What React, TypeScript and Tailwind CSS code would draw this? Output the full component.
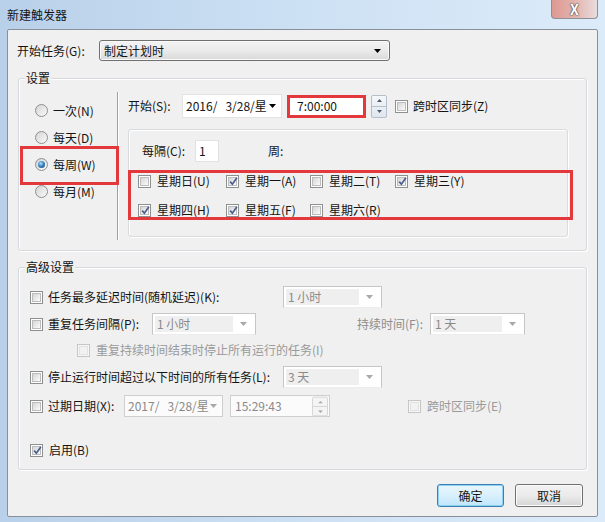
import React from 'react';

const FONT = "font-['Noto_Sans_CJK_SC',sans-serif]";

const Arrow = ({ gray = false }: { gray?: boolean }) => (
  <svg width="7" height="4" viewBox="0 0 7 4">
    <path d="M0 0h7L3.5 4z" fill={gray ? '#a8a8a8' : '#000'} />
  </svg>
);

const Check = ({ checked = false, disabled = false }: { checked?: boolean; disabled?: boolean }) => (
  <span
    className={`relative inline-flex h-[13px] w-[13px] shrink-0 items-center justify-center border ${
      disabled ? 'border-[#c6c6c6] bg-[#f7f7f7]' : 'border-[#8e8f8f] bg-white'
    }`}
  >
    <span
      className={`h-[9px] w-[9px] border ${
        disabled ? 'border-[#e2e2e2] bg-[#f2f2f2]' : 'border-[#bcbcbc] bg-gradient-to-br from-[#d6d6d6] to-[#fbfbfb]'
      }`}
    />
    {checked && (
      <svg className="absolute left-[1px] top-[0px]" width="11" height="11" viewBox="0 0 11 11">
        <path d="M2.2 5.6 L4.4 8.2 L8.9 1.8" fill="none" stroke="#4a5d8c" strokeWidth="1.7" />
      </svg>
    )}
  </span>
);

const Radio = ({ checked = false }: { checked?: boolean }) => (
  <span className="inline-flex h-[13px] w-[13px] shrink-0 items-center justify-center rounded-full border border-[#8e8f8f] bg-gradient-to-br from-[#d4d4d4] to-[#fafafa]">
    {checked && (
      <span className="h-[7px] w-[7px] rounded-full bg-[radial-gradient(circle_at_40%_35%,#b6e1f7_0%,#3b86c4_45%,#123f6c_100%)]" />
    )}
  </span>
);

const Spin = ({ gray = false }: { gray?: boolean }) => (
  <div
    className={`flex h-[23px] w-[16px] flex-col border ${
      gray ? 'border-[#d2d2d2] bg-[#f4f4f4]' : 'border-[#b5bfcc] bg-gradient-to-b from-[#f5f8fb] to-[#dfe6ee]'
    } rounded-[2px]`}
  >
    <div className={`flex flex-1 items-center justify-center border-b ${gray ? 'border-[#d2d2d2]' : 'border-[#b5bfcc]'}`}>
      <svg width="5" height="3" viewBox="0 0 5 3">
        <path d="M0 3h5L2.5 0z" fill={gray ? '#a8a8a8' : '#4d5b6e'} />
      </svg>
    </div>
    <div className="flex flex-1 items-center justify-center">
      <svg width="5" height="3" viewBox="0 0 5 3">
        <path d="M0 0h5L2.5 3z" fill={gray ? '#a8a8a8' : '#4d5b6e'} />
      </svg>
    </div>
  </div>
);

const DCombo = ({ className, text }: { className: string; text: string }) => (
  <div className={`${className} flex h-[22px] border border-[#c6c6c6] border-b-[#ececec] bg-white p-[2px]`}>
    <div className="flex flex-1 items-center bg-[#efefef] pl-[2px] text-[#8a8a8a]">{text}</div>
    <div className="flex w-[20px] items-center justify-center">
      <Arrow gray />
    </div>
  </div>
);

const Group = ({ className, label, children }: { className: string; label: string; children: React.ReactNode }) => (
  <div
    className={`${className} relative ml-[10px] w-[569px] rounded-[3px] border border-[#d5d9de] shadow-[inset_1px_1px_0_#ffffff,1px_1px_0_#ffffff]`}
  >
    <span className="absolute left-[6px] top-[-9px] bg-[#f0f0f0] px-[1px]">{label}</span>
    {children}
  </div>
);

const Day = ({ label, checked, className }: { label: string; checked?: boolean; className: string }) => (
  <div className={`${className} flex items-center gap-[6px]`}>
    <Check checked={checked} />
    <span>{label}</span>
  </div>
);

const Btn = ({ label, def = false }: { label: string; def?: boolean }) => (
  <div
    className={`flex h-[23px] items-center justify-center rounded-[3px] border ${
      def
        ? 'w-[67px] border-[#3c7fb1] bg-gradient-to-b from-[#eaf6fd] via-[#d9f0fc] to-[#bee6fd] shadow-[inset_0_0_0_1px_#8ed2f5]'
        : 'w-[68px] border-[#707070] bg-gradient-to-b from-[#f2f2f2] via-[#ebebeb] to-[#d5d5d5] shadow-[inset_0_0_0_1px_#fcfcfc]'
    }`}
  >
    {label}
  </div>
);

export default function App() {
  return (
    <div
      className={`${FONT} h-[522px] w-[605px] overflow-hidden bg-gradient-to-r from-[#b8d0e9] via-[#cde1f4] to-[#dcebf9] text-[12px] leading-[16px] text-[#141414]`}
    >
      {/* Title bar */}
      <div className="flex h-[29px] items-start justify-between">
        <span className="pl-[7px] pt-[7px]">新建触发器</span>
        <div className="mr-[7px] flex h-[19px] w-[47px] items-center justify-center rounded-b-[4px] border border-t-0 border-[#8f8f99] bg-gradient-to-r from-[#dd9892] via-[#e3b3ae] to-[#e8dcdc]">
          <span className="text-[14px] font-bold leading-[14px] text-white [text-shadow:0_0_2px_#333,0_0_1px_#333]">X</span>
        </div>
      </div>

      {/* Client area */}
      <div className="mx-[7px] flex h-[488px] flex-col rounded-[2px] border border-[#8a9099] bg-[#f0f0f0]">
        <div className="mt-[10px] flex h-[21px] items-center pl-[9px]">
          <span className="w-[82px]">开始任务(G):</span>
          <div className="flex h-[21px] w-[291px] items-center justify-between rounded-[3px] border border-[#707070] bg-gradient-to-b from-[#f3f3f3] via-[#ebebeb] to-[#d9d9d9] pl-[4px] pr-[8px] shadow-[inset_0_0_0_1px_#fafafa]">
            <span>制定计划时</span>
            <Arrow />
          </div>
        </div>

        {/* 设置 */}
        <Group className="mt-[17px] h-[173px]" label="设置">
          <div className="absolute left-[1px] top-[67px] h-[39px] w-[99px] border-[3px] border-[#e3383c]" />
          <div className="flex">
            <div className="flex w-[98px] flex-col pl-[16px] pt-[18px]">
              {[
                ['一次(N)', false],
                ['每天(D)', false],
                ['每周(W)', true],
                ['每月(M)', false],
              ].map(([t, c]) => (
                <div key={t as string} className="flex h-[27px] items-center gap-[5px]">
                  <Radio checked={c as boolean} />
                  <span>{t as string}</span>
                </div>
              ))}
            </div>
            <div className="mt-[13px] h-[148px] w-[2px] border-l border-r border-l-[#a0a0a0] border-r-white" />
            <div className="flex flex-col pl-[9px] pt-[15px]">
              <div className="flex h-[24px] items-center">
                <span className="w-[54px]">开始(S):</span>
                <div className="flex h-[24px] w-[100px] items-center justify-between border border-[#e2e2e2] bg-white pl-[3px] pr-[5px]">
                  <span className="whitespace-pre">2016/   3/28/星</span>
                  <Arrow />
                </div>
                <div className="ml-[5px] flex h-[23px] w-[79px] items-center border-[3px] border-[#e3383c] bg-white pl-[7px]">
                  7:00:00
                </div>
                <div className="ml-[5px]">
                  <Spin />
                </div>
                <div className="ml-[8px] flex items-center gap-[5px]">
                  <Check />
                  <span>跨时区同步(Z)</span>
                </div>
              </div>

              <div className="relative mt-[11px] h-[108px] w-[440px] rounded-[3px] border border-[#d9dcdf] shadow-[inset_1px_1px_0_#ffffff,1px_1px_0_#ffffff]">
                <div className="absolute left-[-1px] top-[40px] h-[50px] w-[445px] border-[3px] border-[#e3383c]" />
                <div className="mt-[10px] flex h-[22px] items-center pl-[13px]">
                  <span className="w-[53px]">每隔(C):</span>
                  <div className="flex h-[22px] w-[24px] items-center border border-[#e2e2e2] bg-white pl-[3px]">1</div>
                  <span className="ml-[49px]">周:</span>
                </div>
                <div className="mt-[9px] flex h-[20px] items-center pl-[9px]">
                  <Day className="w-[88px]" label="星期日(U)" />
                  <Day className="w-[84px]" label="星期一(A)" checked />
                  <Day className="w-[85px]" label="星期二(T)" />
                  <Day className="w-[90px]" label="星期三(Y)" checked />
                </div>
                <div className="mt-[9px] flex h-[20px] items-center pl-[9px]">
                  <Day className="w-[88px]" label="星期四(H)" checked />
                  <Day className="w-[84px]" label="星期五(F)" checked />
                  <Day className="w-[85px]" label="星期六(R)" />
                </div>
              </div>
            </div>
          </div>
        </Group>

        {/* 高级设置 */}
        <Group className="mt-[16px] h-[203px]" label="高级设置">
          <div className="flex flex-col pl-[11px] pt-[18px]">
            <div className="flex h-[22px] items-center">
              <Check />
              <span className="ml-[5px] w-[235px]">任务最多延迟时间(随机延迟)(K):</span>
              <DCombo className="w-[99px]" text="1 小时" />
            </div>
            <div className="mt-[5px] flex h-[22px] items-center">
              <Check />
              <span className="ml-[5px] w-[104px]">重复任务间隔(P):</span>
              <DCombo className="w-[104px]" text="1 小时" />
              <span className="w-[168px] pr-[1px] text-right text-[#8d8d8d]">持续时间(F):</span>
              <DCombo className="ml-[6px] w-[95px]" text="1 天" />
            </div>
            <div className="mt-[5px] flex h-[20px] items-center pl-[47px]">
              <Check disabled />
              <span className="ml-[6px] text-[#9a9a9a]">重复持续时间结束时停止所有运行的任务(I)</span>
            </div>
            <div className="mt-[6px] flex h-[22px] items-center">
              <Check />
              <span className="ml-[5px] w-[235px]">停止运行时间超过以下时间的所有任务(L):</span>
              <DCombo className="w-[99px]" text="3 天" />
            </div>
            <div className="mt-[7px] flex h-[22px] items-center">
              <Check />
              <span className="ml-[5px] w-[76px]">过期日期(X):</span>
              <div className="flex h-[22px] w-[99px] items-center justify-between border border-[#cfcfcf] bg-[#fbfbfb] pl-[3px] pr-[5px] text-[#8a8a8a]">
                <span className="whitespace-pre">2017/   3/28/星</span>
                <Arrow gray />
              </div>
              <div className="ml-[7px] flex h-[22px] w-[100px] items-center justify-between border border-[#cfcfcf] bg-[#fbfbfb] pl-[4px] pr-[1px] text-[#8a8a8a]">
                <span>15:29:43</span>
                <div className="scale-y-[0.85]">
                  <Spin gray />
                </div>
              </div>
              <div className="ml-[78px] flex items-center gap-[6px]">
                <Check disabled />
                <span className="text-[#9a9a9a]">跨时区同步(E)</span>
              </div>
            </div>
            <div className="mt-[23px] flex h-[20px] items-center gap-[6px]">
              <Check checked />
              <span>启用(B)</span>
            </div>
          </div>
        </Group>

        <div className="mt-[14px] flex justify-end gap-[11px] pr-[14px]">
          <Btn label="确定" def />
          <Btn label="取消" />
        </div>
      </div>
    </div>
  );
}
